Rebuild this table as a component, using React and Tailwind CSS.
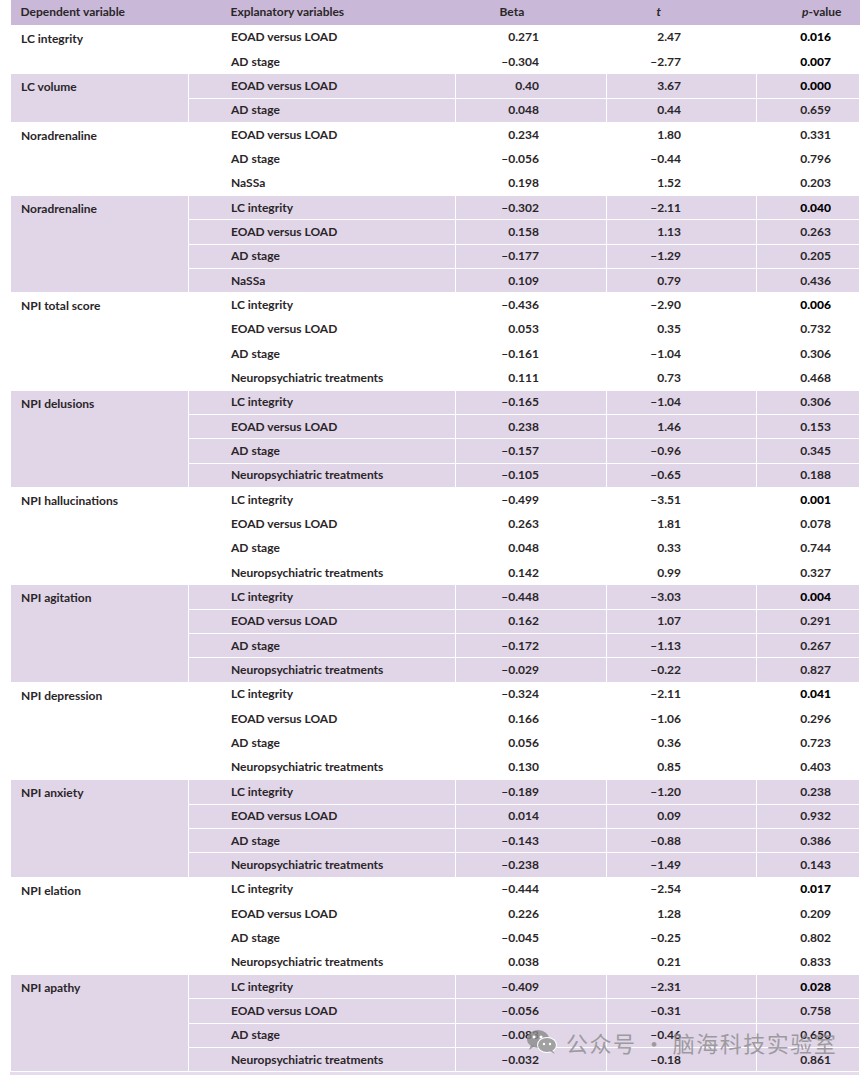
const groups = [
  { dep: "LC integrity", shade: false, rows: [
    ["EOAD versus LOAD", "0.271", "2.47", "0.016", true],
    ["AD stage", "–0.304", "–2.77", "0.007", true],
  ] },
  { dep: "LC volume", shade: true, rows: [
    ["EOAD versus LOAD", "0.40", "3.67", "0.000", true],
    ["AD stage", "0.048", "0.44", "0.659"],
  ] },
  { dep: "Noradrenaline", shade: false, rows: [
    ["EOAD versus LOAD", "0.234", "1.80", "0.331"],
    ["AD stage", "–0.056", "–0.44", "0.796"],
    ["NaSSa", "0.198", "1.52", "0.203"],
  ] },
  { dep: "Noradrenaline", shade: true, rows: [
    ["LC integrity", "–0.302", "–2.11", "0.040", true],
    ["EOAD versus LOAD", "0.158", "1.13", "0.263"],
    ["AD stage", "–0.177", "–1.29", "0.205"],
    ["NaSSa", "0.109", "0.79", "0.436"],
  ] },
  { dep: "NPI total score", shade: false, rows: [
    ["LC integrity", "–0.436", "–2.90", "0.006", true],
    ["EOAD versus LOAD", "0.053", "0.35", "0.732"],
    ["AD stage", "–0.161", "–1.04", "0.306"],
    ["Neuropsychiatric treatments", "0.111", "0.73", "0.468"],
  ] },
  { dep: "NPI delusions", shade: true, rows: [
    ["LC integrity", "–0.165", "–1.04", "0.306"],
    ["EOAD versus LOAD", "0.238", "1.46", "0.153"],
    ["AD stage", "–0.157", "–0.96", "0.345"],
    ["Neuropsychiatric treatments", "–0.105", "–0.65", "0.188"],
  ] },
  { dep: "NPI hallucinations", shade: false, rows: [
    ["LC integrity", "–0.499", "–3.51", "0.001", true],
    ["EOAD versus LOAD", "0.263", "1.81", "0.078"],
    ["AD stage", "0.048", "0.33", "0.744"],
    ["Neuropsychiatric treatments", "0.142", "0.99", "0.327"],
  ] },
  { dep: "NPI agitation", shade: true, rows: [
    ["LC integrity", "–0.448", "–3.03", "0.004", true],
    ["EOAD versus LOAD", "0.162", "1.07", "0.291"],
    ["AD stage", "–0.172", "–1.13", "0.267"],
    ["Neuropsychiatric treatments", "–0.029", "–0.22", "0.827"],
  ] },
  { dep: "NPI depression", shade: false, rows: [
    ["LC integrity", "–0.324", "–2.11", "0.041", true],
    ["EOAD versus LOAD", "0.166", "–1.06", "0.296"],
    ["AD stage", "0.056", "0.36", "0.723"],
    ["Neuropsychiatric treatments", "0.130", "0.85", "0.403"],
  ] },
  { dep: "NPI anxiety", shade: true, rows: [
    ["LC integrity", "–0.189", "–1.20", "0.238"],
    ["EOAD versus LOAD", "0.014", "0.09", "0.932"],
    ["AD stage", "–0.143", "–0.88", "0.386"],
    ["Neuropsychiatric treatments", "–0.238", "–1.49", "0.143"],
  ] },
  { dep: "NPI elation", shade: false, rows: [
    ["LC integrity", "–0.444", "–2.54", "0.017", true],
    ["EOAD versus LOAD", "0.226", "1.28", "0.209"],
    ["AD stage", "–0.045", "–0.25", "0.802"],
    ["Neuropsychiatric treatments", "0.038", "0.21", "0.833"],
  ] },
  { dep: "NPI apathy", shade: true, rows: [
    ["LC integrity", "–0.409", "–2.31", "0.028", true],
    ["EOAD versus LOAD", "–0.056", "–0.31", "0.758"],
    ["AD stage", "–0.083", "–0.46", "0.650"],
    ["Neuropsychiatric treatments", "–0.032", "–0.18", "0.861"],
  ] },
];

function WeChatIcon() {
  return (
    <svg width="32" height="26" viewBox="0 0 32 26" className="fill-current">
      <ellipse cx="12" cy="10" rx="11" ry="9" />
      <path d="M5 16 L3 21 L9 17 Z" />
      <ellipse cx="21" cy="16" rx="10" ry="8" fill="white" />
      <ellipse cx="21" cy="16" rx="9" ry="7" />
      <path d="M26 21 L29 25 L24 22 Z" />
      <circle cx="8" cy="8" r="1.5" fill="white" />
      <circle cx="15" cy="8" r="1.5" fill="white" />
      <circle cx="18" cy="15" r="1.2" fill="white" />
      <circle cx="24" cy="15" r="1.2" fill="white" />
    </svg>
  );
}

export default function App() {
  return (
    <div className="relative w-[865px] h-[1075px] bg-white font-['Lato','Liberation_Sans',sans-serif] text-[12px] text-[#2a2628]">
      <div className="pl-[10px]">
        <table className="w-[849px] border-collapse table-fixed">
          <colgroup>
            <col className="w-[178px]" />
            <col className="w-[267px]" />
            <col className="w-[151px]" />
            <col className="w-[150px]" />
            <col className="w-[103px]" />
          </colgroup>
          <thead>
            <tr className="h-[25px] bg-[#c9b8d8]">
              <th className="text-left pl-[10px] font-bold">Dependent variable</th>
              <th className="text-left pl-[42px] font-bold">Explanatory variables</th>
              <th className="text-left pl-[44px] font-bold">Beta</th>
              <th className="text-left pl-[50px] font-bold italic">t</th>
              <th className="text-right pr-[18px] font-bold"><i>p</i>-value</th>
            </tr>
          </thead>
          <tbody>
            {groups.map((g, gi) =>
              g.rows.map((r, ri) => (
                <tr key={gi + "-" + ri} className={`h-[24.35px] ${g.shade ? "bg-[#e1d5e8]" : "bg-white"}`}>
                  {ri === 0 && (
                    <td rowSpan={g.rows.length} className="align-top pl-[10px] pt-[4px] font-bold border border-white">
                      {g.dep}
                    </td>
                  )}
                  <td className="pl-[42px] font-bold border border-white">{r[0]}</td>
                  <td className="text-right pr-[67px] font-bold border border-white">{r[1]}</td>
                  <td className="text-right pr-[75px] font-bold border border-white">{r[2]}</td>
                  <td className={`text-right pr-[28px] border border-white ${r[4] ? "font-black text-black" : "font-bold"}`}>{r[3]}</td>
                </tr>
              ))
            )}
          </tbody>
        </table>
        <div className="h-[3px] w-[849px] bg-[#e6dcec]" />
      </div>
      <div className="absolute left-[526px] top-[1029px] flex items-center gap-[8px] text-[#8a8a8a]/80 pointer-events-none">
        <WeChatIcon />
        <span className="text-[22px] font-['Noto_Sans_CJK_SC',sans-serif] leading-none tracking-[1.5px]">公众号 · 脑海科技实验室</span>
      </div>
    </div>
  );
}
